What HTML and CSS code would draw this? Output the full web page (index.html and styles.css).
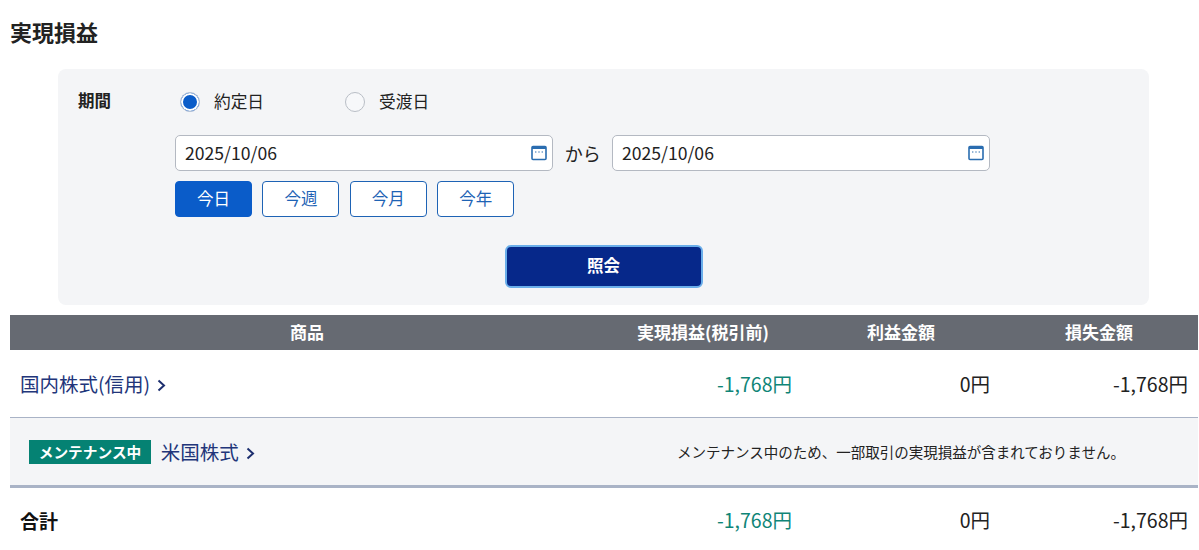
FILE: index.html
```html
<!DOCTYPE html>
<html lang="ja">

<head>
    <meta charset="UTF-8">
    <meta name="viewport" content="width=device-width, initial-scale=1.0">
    <title>実現損益</title>
    <link rel="stylesheet" href="styles.css">
</head>

<body>
    <h1>実現損益</h1>

    <div class="search-panel">
        <div class="period-row">
            <div class="period-label">期間</div>
            <div class="period-body">
                <div class="radio-row">
                    <label class="radio-item"><span class="radio checked"></span><span class="radio-text">約定日</span></label>
                    <label class="radio-item"><span class="radio"></span><span class="radio-text">受渡日</span></label>
                </div>
                <div class="date-row">
                    <div class="date-box">
                        <span class="date-text">2025/10/06</span>
                        <svg class="cal-icon" width="16" height="16" viewBox="0 0 16 16">
                            <rect x="1" y="1.5" width="14" height="13" rx="1" fill="none" stroke="#2a6db0" stroke-width="1.6" />
                            <rect x="1" y="1.5" width="14" height="2.5" fill="#2a6db0" />
                            <path d="M4 7h1.4M7.3 7h1.4M10.6 7h1.4" stroke="#2a6db0" stroke-width="1.2" />
                        </svg>
                    </div>
                    <span class="date-sep">から</span>
                    <div class="date-box">
                        <span class="date-text">2025/10/06</span>
                        <svg class="cal-icon" width="16" height="16" viewBox="0 0 16 16">
                            <rect x="1" y="1.5" width="14" height="13" rx="1" fill="none" stroke="#2a6db0" stroke-width="1.6" />
                            <rect x="1" y="1.5" width="14" height="2.5" fill="#2a6db0" />
                            <path d="M4 7h1.4M7.3 7h1.4M10.6 7h1.4" stroke="#2a6db0" stroke-width="1.2" />
                        </svg>
                    </div>
                </div>
                <div class="quick-row">
                    <button class="quick-btn active">今日</button>
                    <button class="quick-btn">今週</button>
                    <button class="quick-btn">今月</button>
                    <button class="quick-btn">今年</button>
                </div>
            </div>
        </div>
        <div class="submit-row">
            <button class="submit-btn">照会</button>
        </div>
    </div>

    <table class="pl-table">
        <thead>
            <tr>
                <th class="col-name">商品</th>
                <th class="col-num">実現損益(税引前)</th>
                <th class="col-num">利益金額</th>
                <th class="col-num">損失金額</th>
            </tr>
        </thead>
        <tbody>
            <tr class="row-normal">
                <td><a class="item-link" href="#">国内株式(信用)<svg class="chevron" width="9" height="13" viewBox="0 0 9 13"><path d="M1.5 1.5L7 6.5l-5.5 5" fill="none" stroke="#1d2f6f" stroke-width="2" /></svg></a></td>
                <td class="num loss">-1,768円</td>
                <td class="num">0円</td>
                <td class="num">-1,768円</td>
            </tr>
            <tr class="row-maint">
                <td>
                    <span class="maint-badge">メンテナンス中</span>
                    <a class="item-link" href="#">米国株式<svg class="chevron" width="9" height="13" viewBox="0 0 9 13"><path d="M1.5 1.5L7 6.5l-5.5 5" fill="none" stroke="#1d2f6f" stroke-width="2" /></svg></a>
                </td>
                <td class="maint-note" colspan="3">メンテナンス中のため、一部取引の実現損益が含まれておりません。</td>
            </tr>
            <tr class="row-total">
                <td class="total-label">合計</td>
                <td class="num loss">-1,768円</td>
                <td class="num">0円</td>
                <td class="num">-1,768円</td>
            </tr>
        </tbody>
    </table>
</body>

</html>
```

FILE: styles.css
```css
body {
    margin: 0;
    padding: 0 1px 0 10px;
    font-family: "Noto Sans CJK JP", "Noto Sans", sans-serif;
    font-size: 16.7px;
    color: #222;
    background: #ffffff;
    overflow: hidden;
}

h1 {
    margin: 0;
    padding-top: 16px;
    padding-bottom: 1px;
    font-size: 22px;
    line-height: 30px;
    font-weight: 700;
}

.search-panel {
    margin: 22px 49px 10px 48px;
    height: 236px;
    box-sizing: border-box;
    padding: 20px;
    background: #f4f5f7;
    border-radius: 8px;
}

.period-row {
    display: flex;
}

.period-label {
    width: 97px;
    font-size: 16.5px;
    font-weight: 700;
    line-height: 22px;
}

.radio-row {
    display: flex;
    gap: 81px;
    padding-left: 5px;
    height: 26px;
    align-items: center;
}

.radio-item {
    display: flex;
    align-items: center;
    gap: 14px;
    line-height: 24px;
}

.radio-text {
    padding-bottom: 2px;
}

.radio {
    width: 20px;
    height: 20px;
    box-sizing: border-box;
    border: 1px solid #b9bec6;
    border-radius: 50%;
    background: #f7f8fa;
}

.radio.checked {
    border-color: #b9c4d6;
    background: #0a5cc9;
    box-shadow: inset 0 0 0 2px #ffffff;
}

.date-row {
    display: flex;
    align-items: center;
    margin-top: 20px;
}

.date-box {
    width: 378.4px;
    height: 36px;
    box-sizing: border-box;
    padding: 0 5px 0 9px;
    display: flex;
    align-items: center;
    justify-content: space-between;
    font-size: 17.6px;
    line-height: 24px;
    background: #ffffff;
    border: 1px solid #b4b9c2;
    border-radius: 5px;
}

.date-text {
    padding-bottom: 1px;
}

.date-sep {
    width: 58.6px;
    padding-bottom: 1px;
    text-align: center;
    font-size: 18px;
    line-height: 24px;
}

.quick-row {
    display: flex;
    gap: 10.4px;
    margin-top: 10px;
}

.quick-btn {
    width: 77px;
    height: 36px;
    padding: 0 0 2px;
    font-family: inherit;
    font-size: 16.5px;
    color: #1e63b5;
    background: #ffffff;
    border: 1px solid #1e63b5;
    border-radius: 4px;
}

.quick-btn.active {
    color: #ffffff;
    background: #0a5cc9;
    border-color: #0a5cc9;
}

.submit-row {
    display: flex;
    justify-content: center;
    margin-top: 28px;
}

.submit-btn {
    width: 198px;
    height: 43px;
    padding: 0 0 4px;
    font-family: inherit;
    font-size: 16.5px;
    font-weight: 700;
    color: #ffffff;
    background: #06288a;
    border: 2px solid #6aaeea;
    border-radius: 6px;
}

.pl-table {
    width: 1188px;
    border-collapse: collapse;
    table-layout: fixed;
}

.pl-table th {
    height: 33px;
    padding: 0 0 2px;
    font-size: 17px;
    line-height: 24px;
    font-weight: 700;
    color: #ffffff;
    background: #666a72;
}

.col-name {
    width: 594px;
}

.col-num {
    width: 198px;
}

.pl-table td {
    padding: 0 10px;
}

.num {
    text-align: right;
    font-size: 19.5px;
    line-height: 28px;
}

.loss {
    color: #0f8577;
}

.row-normal td {
    height: 67px;
    border-bottom: 1px solid #a9b3c6;
}

.row-maint td {
    height: 67px;
    background: #f4f5f7;
    border-bottom: 3px solid #a9b3c6;
}

.row-total td {
    height: 64px;
    padding-bottom: 2px;
}

.item-link {
    color: #22357a;
    font-size: 19.5px;
    line-height: 28px;
    text-decoration: none;
}

.chevron {
    margin-left: 7px;
}

.row-maint td:first-child {
    padding-left: 19px;
}

.maint-badge {
    display: inline-block;
    width: 122px;
    height: 24px;
    margin-right: 6px;
    font-size: 14.7px;
    font-weight: 700;
    line-height: 24px;
    text-align: center;
    vertical-align: 2px;
    color: #ffffff;
    background: #058273;
}

.row-maint .maint-note {
    padding-left: 73px;
    font-size: 14.5px;
}

.total-label {
    font-size: 19px;
    font-weight: 700;
    color: #111;
}
```
